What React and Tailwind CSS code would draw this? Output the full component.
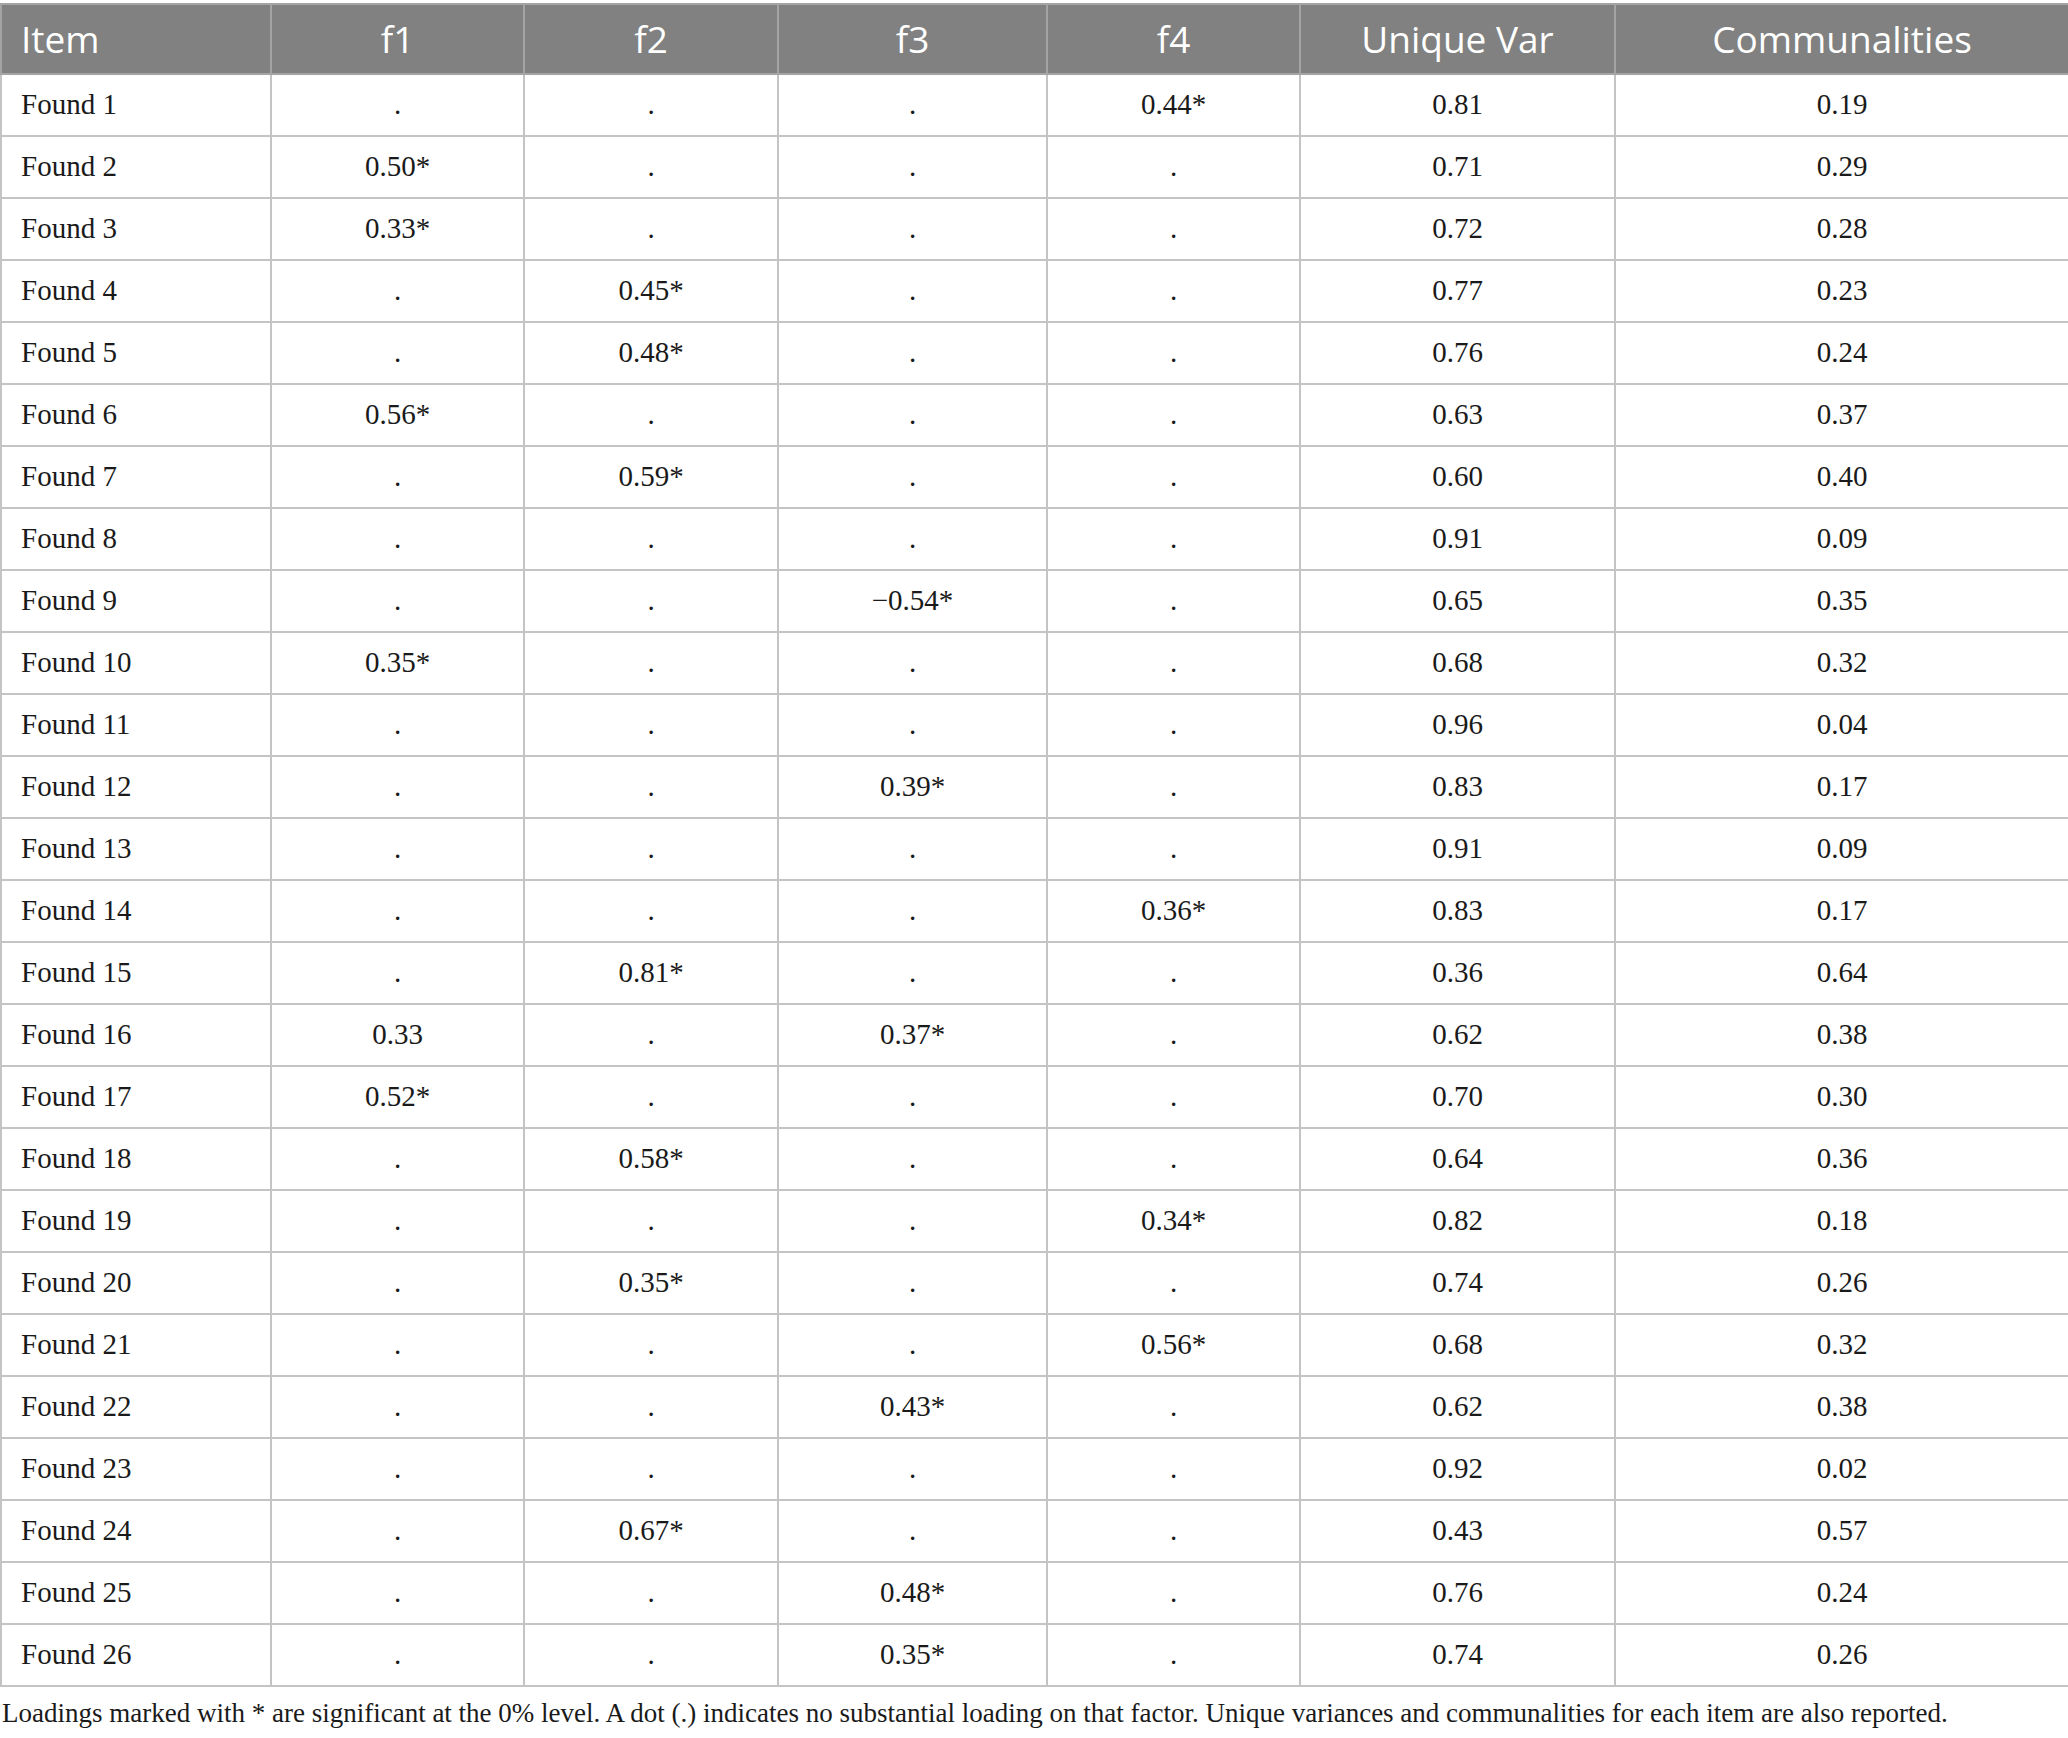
const rows = [
  ['Found 1', '.', '.', '.', '0.44*', '0.81', '0.19'],
  ['Found 2', '0.50*', '.', '.', '.', '0.71', '0.29'],
  ['Found 3', '0.33*', '.', '.', '.', '0.72', '0.28'],
  ['Found 4', '.', '0.45*', '.', '.', '0.77', '0.23'],
  ['Found 5', '.', '0.48*', '.', '.', '0.76', '0.24'],
  ['Found 6', '0.56*', '.', '.', '.', '0.63', '0.37'],
  ['Found 7', '.', '0.59*', '.', '.', '0.60', '0.40'],
  ['Found 8', '.', '.', '.', '.', '0.91', '0.09'],
  ['Found 9', '.', '.', '\u22120.54*', '.', '0.65', '0.35'],
  ['Found 10', '0.35*', '.', '.', '.', '0.68', '0.32'],
  ['Found 11', '.', '.', '.', '.', '0.96', '0.04'],
  ['Found 12', '.', '.', '0.39*', '.', '0.83', '0.17'],
  ['Found 13', '.', '.', '.', '.', '0.91', '0.09'],
  ['Found 14', '.', '.', '.', '0.36*', '0.83', '0.17'],
  ['Found 15', '.', '0.81*', '.', '.', '0.36', '0.64'],
  ['Found 16', '0.33', '.', '0.37*', '.', '0.62', '0.38'],
  ['Found 17', '0.52*', '.', '.', '.', '0.70', '0.30'],
  ['Found 18', '.', '0.58*', '.', '.', '0.64', '0.36'],
  ['Found 19', '.', '.', '.', '0.34*', '0.82', '0.18'],
  ['Found 20', '.', '0.35*', '.', '.', '0.74', '0.26'],
  ['Found 21', '.', '.', '.', '0.56*', '0.68', '0.32'],
  ['Found 22', '.', '.', '0.43*', '.', '0.62', '0.38'],
  ['Found 23', '.', '.', '.', '.', '0.92', '0.02'],
  ['Found 24', '.', '0.67*', '.', '.', '0.43', '0.57'],
  ['Found 25', '.', '.', '0.48*', '.', '0.76', '0.24'],
  ['Found 26', '.', '.', '0.35*', '.', '0.74', '0.26'],
];

const headers = ['Item', 'f1', 'f2', 'f3', 'f4', 'Unique Var', 'Communalities'];
const widths = ['w-[270px]', 'w-[253px]', 'w-[254px]', 'w-[269px]', 'w-[253px]', 'w-[315px]', 'w-[454px]'];

export default function App() {
  return (
    <div className="w-[2068px] min-h-[1738px] bg-white pt-[3px]">
      <table className="w-[2068px] table-fixed border-collapse border-2 border-[#c4c4c4]">
        <thead>
          <tr className="h-[70px] bg-[#808180] text-white font-[family-name:Open_Sans,sans-serif] text-[37px]">
            {headers.map((h, i) => (
              <th
                key={h}
                className={`${widths[i]} border-2 border-[#a3a4a3] font-normal ${i === 0 ? 'text-left pl-[19px]' : 'text-center'}`}
              >
                {h}
              </th>
            ))}
          </tr>
        </thead>
        <tbody className="font-[family-name:Liberation_Serif,serif] text-[29px] text-[#1a1a1a]">
          {rows.map((r) => (
            <tr key={r[0]} className="h-[62px]">
              {r.map((c, i) => (
                <td
                  key={i}
                  className={`border-2 border-[#c4c4c4] ${i === 0 ? 'text-left pl-[19px]' : 'text-center'}`}
                >
                  {c}
                </td>
              ))}
            </tr>
          ))}
        </tbody>
      </table>
      <p className="font-[family-name:Liberation_Serif,serif] text-[27px] text-[#1a1a1a] pt-[13px] pl-[2px] leading-none">
        Loadings marked with * are significant at the 0% level. A dot (.) indicates no substantial loading on that factor. Unique variances and communalities for each item are also reported.
      </p>
    </div>
  );
}
